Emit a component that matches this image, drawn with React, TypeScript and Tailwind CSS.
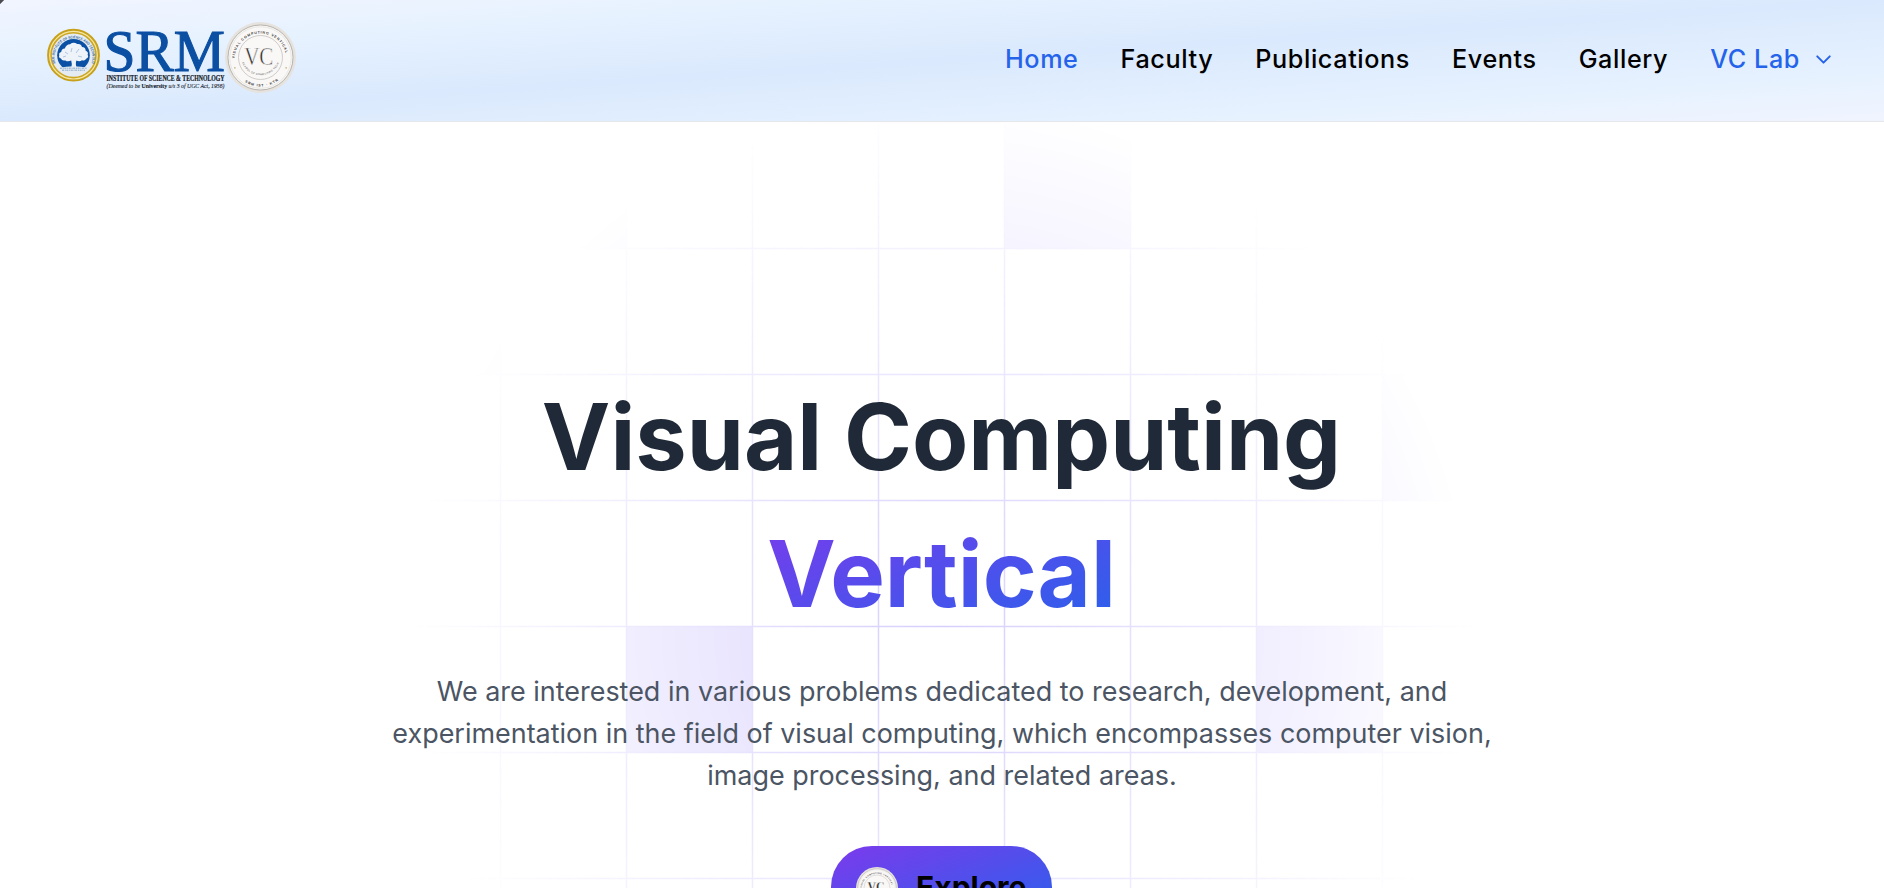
import React from 'react';
import { ChevronDown } from 'lucide-react';

const links = ['Home', 'Faculty', 'Publications', 'Events', 'Gallery'];

function VCSeal({ className }: { className: string }) {
  return (
    <svg viewBox="0 0 72 72" className={className} fontFamily="Liberation Serif, serif">
      <defs>
        <path id="sealTop" d="M9.700 38a26.300 26.300 0 1 1 52.600 0" />
        <path id="sealBottom" d="M6.500 36a29.500 29.500 0 0 0 59 0" />
        <path id="sealInner" d="M16 34a20 20 0 0 0 40 0" />
      </defs>
      <circle cx="36" cy="36" r="36" fill="#e6e3df" />
      <circle cx="36" cy="36" r="33" fill="#f9f8f6" stroke="#b5b1ac" strokeWidth="1" />
      <circle cx="36" cy="36" r="31.2" fill="none" stroke="#d8d5d1" strokeWidth=".5" />
      <circle cx="36" cy="36" r="22.3" fill="none" stroke="#bcb8b4" strokeWidth=".7" />
      <g fill="#45413f" fontFamily="Liberation Sans, sans-serif" fontWeight="700">
        <text fontSize="3.6" letterSpacing=".8"><textPath href="#sealTop" startOffset="1">VISUAL COMPUTING VERTICAL</textPath></text>
        <text fontSize="3.6" letterSpacing=".9"><textPath href="#sealBottom" startOffset="29.500">SRM IST · KTR</textPath></text>
        <text fontSize="2.6" fontWeight="400" letterSpacing=".35"><textPath href="#sealInner" startOffset="7">SCHOOL OF COMPUTING TECH</textPath></text>
      </g>
      <circle cx="10" cy="46.500" r=".9" fill="#c8b98c" />
      <circle cx="62" cy="46.500" r=".9" fill="#c8b98c" />
      <text x="19.500" y="43.600" fontSize="25" fill="#2b2827" stroke="#f9f8f6" strokeWidth=".6" textLength="29.500" lengthAdjust="spacingAndGlyphs">VC</text>
    </svg>
  );
}

function SRMLogo() {
  return (
    <svg viewBox="0 0 180 66" className="h-[66px] w-[180px] overflow-visible">
      <defs>
        <path id="crest" d="M9.500 34.500a19 19 0 1 1 36 0" />
      </defs>
      <circle cx="27.5" cy="26.2" r="25.400" fill="#f5e7a6" stroke="#c8a11c" strokeWidth="2" />
      <circle cx="27.5" cy="26.2" r="22.400" fill="#e4ebf2" stroke="#cda622" strokeWidth="1.600" />
      <circle cx="27.5" cy="26.2" r="16.300" fill="#0a50a4" />
      <text fontFamily="Liberation Sans, sans-serif" fontSize="3.7" fontWeight="700" fill="#39699f"><textPath href="#crest" textLength="76" lengthAdjust="spacingAndGlyphs">SRM INSTITUTE OF SCIENCE AND TECHNOLOGY</textPath></text>
      <path fill="#eef3f9" d="M25.300 39.500q1.200-4.500-.1-8-3.500 1.600-5.800-.1-3.600.8-4.400-1.800-2.800-.8-1.700-3.300-.9-2.200 1.900-3.300.2-3.300 3.600-3.600 1.300-4 5.200-4.200 3.700-2.600 7.200-.1 3.900-.6 4.800 2.900 3.700.3 3.700 3.700 3.200 1.300 1.900 4.100 1.700 2.700-1.500 4-1 2.500-4.100 1.400-2.300 2-5.600.4-1.300 3.300.5 8z" />
      <path d="m19 23 3 2m4-6-1 4m8-3-3 4m-13 4 3-1m12 0 4 1" stroke="#8fb0d6" strokeWidth=".7" fill="none" />
      <path fill="#e4ebf2" d="M13 38.800q14.500-3 29 0l-3 5.200q-11.500 5-23 0z" />
      <path d="M14 39.200h27M16 41.200h23" stroke="#7d9fc6" strokeWidth=".9" strokeDasharray="2 .8 1 .6" />
      <g fontFamily="Liberation Serif, serif">
        <text x="57.500" y="42.200" fontSize="58.500" fill="#0b4fa3" stroke="#0b4fa3" strokeWidth="1.100" textLength="121.500" lengthAdjust="spacingAndGlyphs">SRM</text>
        <text x="60.500" y="51.800" fontSize="7.900" fontWeight="700" fill="#151b27" stroke="#151b27" strokeWidth=".2" textLength="118" lengthAdjust="spacingAndGlyphs">INSTITUTE OF SCIENCE &amp; TECHNOLOGY</text>
        <text x="60.500" y="59.200" fontSize="7" fontStyle="italic" fill="#151b27" stroke="#151b27" strokeWidth=".12" textLength="118" lengthAdjust="spacingAndGlyphs">(Deemed to be <tspan fontWeight="700" fontStyle="normal">University</tspan> u/s 3 of UGC Act, 1956)</text>
      </g>
    </svg>
  );
}

const squares = [[1004, 122], [1382, 374], [626, 626], [1256, 626], [500, 122], [374, 248]];

function GridBackdrop() {
  return (
    <svg viewBox="0 122 1884 766" className="absolute inset-0 h-full w-full">
      <defs>
        <radialGradient id="fade" gradientUnits="userSpaceOnUse" cx="942" cy="634" r="535">
          <stop offset="0" stopColor="#fff" />
          <stop offset="1" stopColor="#fff" stopOpacity="0" />
        </radialGradient>
        <mask id="spot" maskUnits="userSpaceOnUse" x="0" y="122" width="1884" height="766">
          <rect y="122" width="1884" height="766" fill="url(#fade)" />
        </mask>
      </defs>
      <g mask="url(#spot)">
        {squares.map(([x, y]) => (
          <rect key={`${x}-${y}`} x={x} y={y} width="126.500" height="126.500" fill="#ddd6fe" />
        ))}
        {Array.from({ length: 15 }, (_, i) => (
          <path key={i} d={`M${i * 126 - 3.5} 122V888M0 ${i * 126 - 3.5}H1884`} stroke="#d6cffd" strokeWidth="1.500" />
        ))}
      </g>
    </svg>
  );
}

export default function App() {
  return (
    <div className="flex h-[888px] w-full flex-col overflow-hidden bg-white font-['Inter',sans-serif]">
      <header className="relative flex h-[122px] shrink-0 items-start justify-between border-b border-[#e5e7eb] bg-[linear-gradient(to_bottom_right,#f1f5ff,#e7f2ff_22%,#dae9fd_50%,#e7f2ff_82%,#f0f4ff)] pr-[48px] pl-[46px]">
        <span className="absolute top-0 left-0 size-[4px] bg-[linear-gradient(135deg,#4b4b50_45%,transparent_60%)]" />
        <div className="flex pt-[22px]">
          <div className="pt-[7px]"><SRMLogo /></div>
          <VCSeal className="-ml-px size-[71px]" />
        </div>
        <nav className="flex items-center gap-[42px] pt-[40px] text-[25.2px] leading-[38px] font-medium tracking-[0.6px] text-black">
          {links.map((label) => (
            <a key={label} className={label === 'Home' ? 'text-[#2563eb]' : ''}>{label}</a>
          ))}
          <a className="flex items-center gap-[11px] text-[#2563eb]">VC Lab<ChevronDown className="size-[25px]" strokeWidth={1.9} /></a>
        </nav>
      </header>
      <main className="relative flex min-h-0 flex-1 flex-col items-center">
        <GridBackdrop />
        <h1 className="relative mt-[246px] mr-px flex flex-col items-center text-[91.9px] leading-[137px] font-bold text-[#1f2937]">
          <span>Visual Computing</span>
          <span className="bg-[linear-gradient(to_bottom_right,#7c3aed,#2563eb)] bg-clip-text text-transparent">Vertical</span>
        </h1>
        <p className="relative mt-[29px] text-center text-[26.95px] leading-[42px] text-[#4b5563]">
          We are interested in various problems dedicated to research, development, and<br />
          experimentation in the field of visual computing, which encompasses computer vision,<br />
          image processing, and related areas.
        </p>
        <button className="relative mt-[49px] mr-px flex h-[83px] w-[221px] shrink-0 items-center gap-[18px] rounded-[41px] bg-[linear-gradient(to_bottom_right,#7c3aed,#2563eb)] pl-[25px] text-[30px] font-bold text-black">
          <VCSeal className="size-[42px]" />
          Explore
        </button>
      </main>
    </div>
  );
}
